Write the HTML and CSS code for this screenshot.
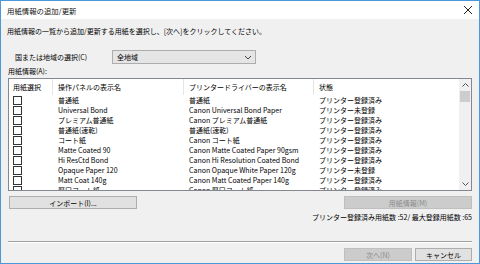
FILE: index.html
```html
<!DOCTYPE html>
<html lang="ja">
<head>
  <meta charset="UTF-8" />
  <title>用紙情報の追加/更新</title>
  <link rel="stylesheet" href="styles.css">
</head>
<body>
  <div class="window">
    <div class="titlebar">
      <span class="title">用紙情報の追加/更新</span>
      <svg class="close" width="10" height="10" viewBox="0 0 10 10">
        <path d="M1 1 L9 9 M9 1 L1 9" stroke="#222" stroke-width="1" fill="none"/>
      </svg>
    </div>

    <div class="content">
      <p class="intro">用紙情報の一覧から追加/更新する用紙を選択し、[次へ]をクリックしてください。</p>

      <div class="region">
        <span class="region-label">国または地域の選択(C)</span>
        <div class="select">
          <span>全地域</span>
          <svg width="8" height="5" viewBox="0 0 8 5">
            <path d="M1 1 L4 4 L7 1" stroke="#444" stroke-width="1" fill="none"/>
          </svg>
        </div>
      </div>

      <div class="list-label">用紙情報(A):</div>

      <div class="list">
        <div class="list-main">
          <div class="row head">
            <div class="c1">用紙選択</div>
            <div class="c2">操作パネルの表示名</div>
            <div class="c3">プリンタードライバーの表示名</div>
            <div class="c4">状態</div>
          </div>
          <div class="row"><div class="c1"><span class="check"></span></div><div class="c2">普通紙</div><div class="c3">普通紙</div><div class="c4">プリンター登録済み</div></div>
          <div class="row"><div class="c1"><span class="check"></span></div><div class="c2">Universal Bond</div><div class="c3">Canon Universal Bond Paper</div><div class="c4">プリンター未登録</div></div>
          <div class="row"><div class="c1"><span class="check"></span></div><div class="c2">プレミアム普通紙</div><div class="c3">Canon プレミアム普通紙</div><div class="c4">プリンター登録済み</div></div>
          <div class="row"><div class="c1"><span class="check"></span></div><div class="c2">普通紙(速乾)</div><div class="c3">普通紙(速乾)</div><div class="c4">プリンター登録済み</div></div>
          <div class="row"><div class="c1"><span class="check"></span></div><div class="c2">コート紙</div><div class="c3">Canon コート紙</div><div class="c4">プリンター登録済み</div></div>
          <div class="row"><div class="c1"><span class="check"></span></div><div class="c2">Matte Coated 90</div><div class="c3">Canon Matte Coated Paper 90gsm</div><div class="c4">プリンター登録済み</div></div>
          <div class="row"><div class="c1"><span class="check"></span></div><div class="c2">Hi ResCtd Bond</div><div class="c3">Canon Hi Resolution Coated Bond</div><div class="c4">プリンター登録済み</div></div>
          <div class="row"><div class="c1"><span class="check"></span></div><div class="c2">Opaque Paper 120</div><div class="c3">Canon Opaque White Paper 120g</div><div class="c4">プリンター未登録</div></div>
          <div class="row"><div class="c1"><span class="check"></span></div><div class="c2">Matt Coat 140g</div><div class="c3">Canon Matt Coated Paper 140g</div><div class="c4">プリンター登録済み</div></div>
          <div class="row"><div class="c1"><span class="check"></span></div><div class="c2">厚口コート紙</div><div class="c3">Canon 厚口コート紙</div><div class="c4">プリンター登録済み</div></div>
        </div>
        <div class="scrollbar">
          <div class="arrow">
            <svg width="7" height="4" viewBox="0 0 7 4"><path d="M0.5 3.5 L3.5 0.5 L6.5 3.5" stroke="#555" fill="none"/></svg>
          </div>
          <div class="thumb"></div>
          <div class="track"></div>
          <div class="arrow">
            <svg width="7" height="4" viewBox="0 0 7 4"><path d="M0.5 0.5 L3.5 3.5 L6.5 0.5" stroke="#555" fill="none"/></svg>
          </div>
        </div>
      </div>

      <div class="actions">
        <button class="btn wide">インポート(I)...</button>
        <button class="btn wide" disabled>用紙情報(M)</button>
      </div>

      <div class="count">プリンター登録済み用紙数 :52/ 最大登録用紙数 :65</div>

      <hr class="sep">

      <div class="footer">
        <button class="btn next" disabled>次へ(N)</button>
        <button class="btn cancel">キャンセル</button>
      </div>
    </div>
  </div>
</body>
</html>
```

FILE: styles.css
```css
* {
  box-sizing: border-box;
}
body {
  margin: 0;
  font-family: "Noto Sans CJK JP", "Noto Sans", sans-serif;
  font-size: 7px;
  color: #000;
}
.window {
  width: 480px;
  height: 264px;
  border: 1px solid #4b98d8;
  background: #f0f0f0;
  display: flex;
  flex-direction: column;
}
.titlebar {
  height: 18px;
  background: #ffffff;
  display: flex;
  align-items: center;
  justify-content: space-between;
  padding: 0 6px 0 6px;
}
.title {
  font-size: 7.4px;
  color: #111;
}
.content {
  flex: 1;
  padding: 0 7px 0 7px;
  display: flex;
  flex-direction: column;
}
.intro {
  margin: 7px 0 0 -1px;
  line-height: 10px;
}
.region {
  margin-top: 14px;
  display: flex;
  align-items: center;
  height: 14px;
}
.region-label {
  width: 104px;
  padding-left: 7px;
}
.select {
  width: 144px;
  height: 14px;
  border: 1px solid #adadad;
  background: #e5e5e5;
  display: flex;
  align-items: center;
  justify-content: space-between;
  padding: 0 3px 0 4px;
}
.list-label {
  margin-top: 2px;
  line-height: 10px;
}
.list {
  margin-top: 2px;
  height: 113px;
  border: 1px solid #828790;
  background: #ffffff;
  display: flex;
  overflow: hidden;
}
.list-main {
  flex: 1;
}
.row {
  display: flex;
  height: 10px;
  align-items: center;
  line-height: 10px;
  white-space: nowrap;
}
.row.head {
  height: 16px;
}
.row.head > div {
  border-right: 1px solid #e5e5e5;
  height: 16px;
  line-height: 16px;
}
.c1 {
  width: 44px;
  padding-left: 4px;
  display: flex;
  align-items: center;
}
.c2 {
  width: 131px;
  padding-left: 5px;
}
.c3 {
  width: 130px;
  padding-left: 5px;
}
.c4 {
  flex: 1;
  padding-left: 5px;
}
.row.head > .c4 {
  border-right: none;
}
.check {
  width: 9px;
  height: 9px;
  border: 1px solid #333;
  background: #fff;
}
.scrollbar {
  width: 12px;
  background: #f0f0f0;
  display: flex;
  flex-direction: column;
  align-items: center;
}
.arrow {
  height: 12px;
  display: flex;
  align-items: center;
  justify-content: center;
}
.thumb {
  width: 10px;
  height: 11px;
  background: #cdcdcd;
}
.track {
  flex: 1;
}
.btn {
  font-family: inherit;
  font-size: 7px;
  height: 13px;
  padding: 0;
  border: 1px solid #adadad;
  background: #e1e1e1;
  color: #000;
}
.btn:disabled {
  background: #cccccc;
  border-color: #bfbfbf;
  color: #8a8a8a;
}
.actions {
  margin-top: 5px;
  display: flex;
  justify-content: space-between;
  padding-left: 1px;
}
.wide {
  width: 128px;
}
.count {
  margin-top: 3px;
  line-height: 10px;
  text-align: right;
}
.sep {
  margin: 19px 0 0 0;
  border: none;
  border-top: 1px solid #a0a0a0;
  border-bottom: 1px solid #ffffff;
}
.footer {
  margin-top: 5px;
  display: flex;
  justify-content: flex-end;
  gap: 3px;
}
.next {
  width: 68px;
}
.cancel {
  width: 57px;
}
```
